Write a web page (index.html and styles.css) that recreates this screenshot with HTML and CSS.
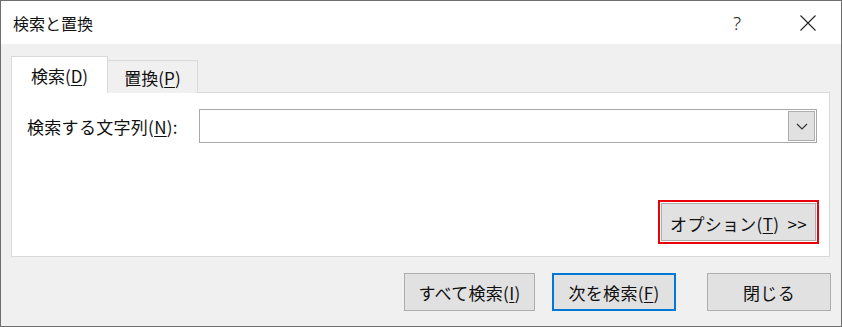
FILE: index.html
```html
<!DOCTYPE html>
<html lang="ja">
<head>
    <meta charset="UTF-8">
    <title>検索と置換</title>
    <link rel="stylesheet" href="styles.css">
</head>
<body>
    <div class="dialog">
        <div class="titlebar">
            <span class="title">検索と置換</span>
            <span class="help">?</span>
            <span class="close">
                <svg width="16" height="16" viewBox="0 0 16 16"><path d="M0.5 0.5 L15.5 15.5 M15.5 0.5 L0.5 15.5" stroke="#222" stroke-width="1.1" fill="none"/></svg>
            </span>
        </div>

        <div class="content">
            <div class="tabs">
                <div class="tab active">検索(<u>D</u>)</div>
                <div class="tab">置換(<u>P</u>)</div>
            </div>

            <div class="panel">
                <div class="find-row">
                    <label class="find-label">検索する文字列(<u>N</u>):</label>
                    <div class="combo">
                        <input type="text" class="combo-input">
                        <span class="combo-btn">
                            <svg width="12" height="7" viewBox="0 0 12 7"><path d="M1 1 L6 6 L11 1" stroke="#333" stroke-width="1.2" fill="none"/></svg>
                        </span>
                    </div>
                </div>
                <div class="options-wrap">
                    <button class="btn options">オプション(<u>T</u>)&nbsp; &gt;&gt;</button>
                </div>
            </div>

            <div class="actions">
                <button class="btn find-all">すべて検索(<u>I</u>)</button>
                <button class="btn find-next">次を検索(<u>F</u>)</button>
                <button class="btn close-btn">閉じる</button>
            </div>
        </div>
    </div>
</body>
</html>
```

FILE: styles.css
```css
* {
    margin: 0;
    padding: 0;
    box-sizing: border-box;
}
body {
    font-family: 'Noto Sans CJK JP', 'Noto Sans', sans-serif;
    font-size: 17px;
    color: #111;
    background: #fff;
}
u {
    text-decoration: underline;
    text-underline-offset: 2px;
}
.dialog {
    width: 842px;
    height: 327px;
    border: 1px solid #6e6e6e;
    background-color: #f0f0f0;
    display: flex;
    flex-direction: column;
}
.titlebar {
    height: 43px;
    background: #fff;
    display: flex;
    align-items: center;
    flex-shrink: 0;
}
.title {
    padding-left: 12px;
    flex: 1;
    line-height: 1;
    font-size: 16px;
}
.help {
    font-family: 'Noto Sans', sans-serif;
    font-size: 19px;
    font-weight: 300;
    width: 20px;
    margin-right: 47px;
    color: #222;
}
.close {
    display: flex;
    width: 16px;
    margin-right: 25px;
}
.content {
    flex: 1;
    padding: 13px 10px 0 10px;
    display: flex;
    flex-direction: column;
}
.tabs {
    display: flex;
    align-items: flex-end;
    height: 36px;
    margin-bottom: -1px;
    position: relative;
    z-index: 1;
}
.tab {
    height: 33px;
    border: 1px solid #d9d9d9;
    border-bottom: none;
    border-left: none;
    background-color: #f0f0f0;
    display: flex;
    align-items: center;
    justify-content: center;
    line-height: 1;
    width: 90px;
}
.tab.active {
    height: 37px;
    width: 97px;
    background-color: #fff;
    border-left: 1px solid #d9d9d9;
}
.panel {
    height: 165px;
    width: 819px;
    background-color: #fff;
    border: 1px solid #d9d9d9;
    display: flex;
    flex-direction: column;
    padding: 16px 12px 12px 15px;
}
.find-row {
    display: flex;
    align-items: center;
}
.find-label {
    width: 172px;
    line-height: 1;
    letter-spacing: 0.3px;
}
.combo {
    flex: 1;
    height: 34px;
    border: 1px solid #a9a9a9;
    display: flex;
    align-items: stretch;
    padding: 1px;
    background: #fff;
}
.combo-input {
    flex: 1;
    border: none;
    outline: none;
    background: transparent;
}
.combo-btn {
    width: 27px;
    background-color: #e1e1e1;
    border: 1px solid #adadad;
    display: flex;
    align-items: center;
    justify-content: center;
}
.options-wrap {
    margin-top: auto;
    display: flex;
    justify-content: flex-end;
    margin-right: -2px;
}
.btn {
    font-family: 'Noto Sans CJK JP', 'Noto Sans', sans-serif;
    font-size: 17px;
    color: #111;
    background-color: #e1e1e1;
    border: 1px solid #adadad;
    height: 38px;
    line-height: 1;
    letter-spacing: 0.3px;
}
.options {
    width: 161px;
    height: 44px;
    border: 2px solid #e8000a;
    box-shadow: inset 0 0 0 1px #fff, inset 0 0 0 2px #adadad;
    padding-top: 2px;
}
.actions {
    display: flex;
    justify-content: flex-end;
    margin-top: 16px;
}
.find-all {
    width: 131px;
}
.find-next {
    width: 124px;
    margin-left: 17px;
    border: 2px solid #0078d7;
}
.close-btn {
    width: 124px;
    margin-left: 31px;
}
```
